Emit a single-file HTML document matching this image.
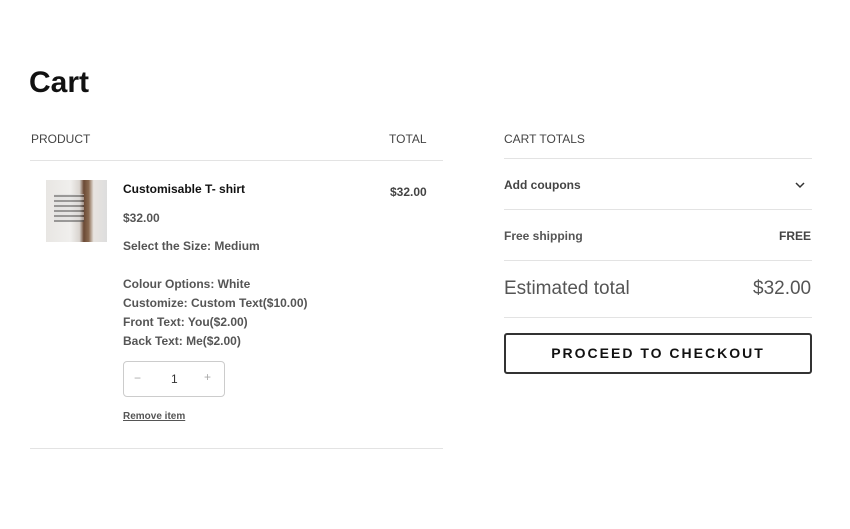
<!DOCTYPE html>
<html><head><meta charset="utf-8"><style>
body{margin:0;width:850px;height:529px;background:#fff;font-family:"Liberation Sans",Arial,sans-serif;position:relative;overflow:hidden}
.a{position:absolute;white-space:nowrap}
.hr{position:absolute;height:1px;background:#e3e3e3}
.g{color:#555;font-weight:bold;font-size:12px}
</style></head><body>
<div class="a" style="left:29px;top:66px;font-size:30px;font-weight:bold;color:#111">Cart</div>
<div class="a" style="left:31px;top:132px;font-size:12px;color:#444">PRODUCT</div>
<div class="a" style="left:389px;top:132px;font-size:12px;color:#444">TOTAL</div>
<div class="hr" style="left:30px;top:160px;width:413px"></div>
<div class="a" style="left:46px;top:180px;width:61px;height:62px;background:linear-gradient(90deg,#e8e6e3 0%,#f0efed 40%,#d9d4cf 55%,#6b4a35 62%,#8a6a50 70%,#e8e4e0 78%,#ddd 100%)"></div>
<div class="a" style="left:54px;top:194px;width:30px;height:28px;background:repeating-linear-gradient(0deg,#444 0 2px,#ddd 2px 5px);opacity:.5"></div>
<div class="a" style="left:123px;top:182px;font-size:12px;font-weight:bold;color:#111">Customisable T- shirt</div>
<div class="a" style="left:390px;top:185px;font-size:12px;font-weight:bold;color:#444">$32.00</div>
<div class="a g" style="left:123px;top:211px">$32.00</div>
<div class="a g" style="left:123px;top:239px">Select the Size: Medium</div>
<div class="a g" style="left:123px;top:275px;line-height:19px">Colour Options: White<br>Customize: Custom Text($10.00)<br>Front Text: You($2.00)<br>Back Text: Me($2.00)</div>
<div class="a" style="left:123px;top:361px;width:100px;height:34px;border:1px solid #ccc;border-radius:4px;font-size:12px;color:#333">
<span class="a" style="left:10px;top:9px;color:#aaa">−</span><span class="a" style="left:47px;top:10px">1</span><span class="a" style="left:80px;top:8px;color:#aaa">+</span></div>
<div class="a" style="left:123px;top:411px;font-size:10px;font-weight:bold;color:#555;text-decoration:underline">Remove item</div>
<div class="hr" style="left:30px;top:448px;width:413px"></div>

<div class="a" style="left:504px;top:132px;font-size:12px;color:#444">CART TOTALS</div>
<div class="hr" style="left:504px;top:158px;width:308px"></div>
<div class="a g" style="left:504px;top:178px;color:#444">Add coupons</div>
<svg class="a" style="left:794px;top:181px" width="12" height="8" viewBox="0 0 12 8"><path d="M2 2l4 4 4-4" fill="none" stroke="#333" stroke-width="1.5"/></svg>
<div class="hr" style="left:504px;top:209px;width:308px"></div>
<div class="a g" style="left:504px;top:229px">Free shipping</div>
<div class="a g" style="left:779px;top:229px;color:#444">FREE</div>
<div class="hr" style="left:504px;top:260px;width:308px"></div>
<div class="a" style="left:504px;top:278px;font-size:19px;color:#555">Estimated total</div>
<div class="a" style="left:753px;top:278px;font-size:19px;color:#555">$32.00</div>
<div class="hr" style="left:504px;top:317px;width:308px"></div>
<div class="a" style="left:504px;top:333px;width:304px;height:37px;border:2px solid #333;border-radius:3px;text-align:center;line-height:37px;font-size:14px;font-weight:bold;letter-spacing:2px;color:#111">PROCEED TO CHECKOUT</div>
</body></html>
